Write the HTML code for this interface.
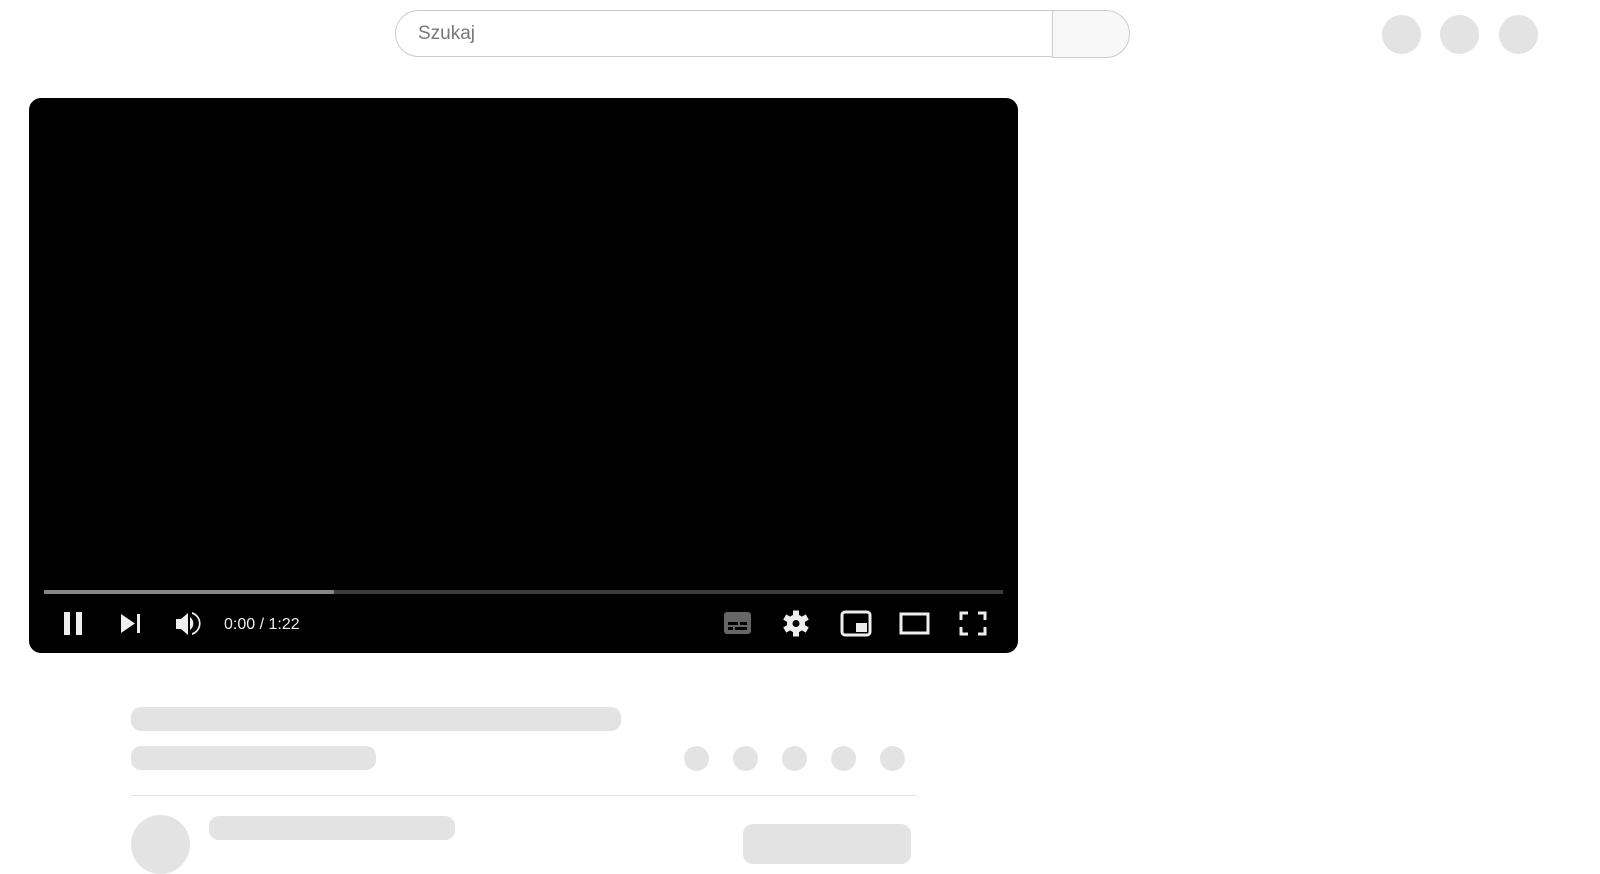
<!DOCTYPE html>
<html><head><style>
body{margin:0;width:1600px;height:865px;background:#fff;position:relative;overflow:hidden;font-family:"Liberation Sans",sans-serif}
.a{position:absolute}
.g{background:#e3e3e3}
.c{border-radius:50%}
.r{border-radius:10px}
svg{position:absolute}
</style></head><body>
<div class="a" style="left:395px;top:10px;width:657px;height:47px;border:1px solid #ccc;border-right:none;border-radius:24px 0 0 24px;box-sizing:border-box"></div>
<div class="a" style="left:418px;top:23px;font-size:19px;color:#777">Szukaj</div>
<div class="a" style="left:1052px;top:10px;width:78px;height:48px;border:1px solid #ccc;border-radius:0 24px 24px 0;background:#f8f8f8;box-sizing:border-box"></div>
<div class="a g c" style="left:1382px;top:15px;width:39px;height:39px"></div>
<div class="a g c" style="left:1440px;top:15px;width:39px;height:39px"></div>
<div class="a g c" style="left:1499px;top:15px;width:39px;height:39px"></div>

<div class="a" style="left:29px;top:98px;width:989px;height:555px;background:#000;border-radius:12px"></div>
<div class="a" style="left:44px;top:590px;width:959px;height:4px;background:#3d3d3d"></div>
<div class="a" style="left:44px;top:590px;width:290px;height:4px;background:#888"></div>
<svg style="left:0;top:0" width="1600" height="865">
<g fill="#eee">
<rect x="64" y="612" width="6" height="23"/><rect x="76" y="612" width="6" height="23"/>
<path d="M121 614 L135 623.5 L121 633Z"/><rect x="137" y="614" width="3" height="19"/>
<path d="M176 619h5l7-6v22l-7-6h-5z"/>
<path d="M190 617a8 8 0 0 1 0 13z"/>
<path d="M192 612a12 12 0 0 1 0 23v-2a10 10 0 0 0 0-19z"/>
</g>
<text x="224" y="629" fill="#eee" font-size="16" font-family="Liberation Sans">0:00 / 1:22</text>
<rect x="724" y="612" width="27" height="22" rx="3" fill="#666"/>
<g fill="#000"><rect x="728" y="622" width="10" height="3"/><rect x="740" y="622" width="7" height="3"/><rect x="728" y="627" width="5" height="3"/><rect x="735" y="627" width="12" height="3"/></g>
<g transform="translate(796 623.5)" fill="#eee"><circle r="9"/><g><rect x="-3" y="-13" width="6" height="26"/><rect x="-3" y="-13" width="6" height="26" transform="rotate(60)"/><rect x="-3" y="-13" width="6" height="26" transform="rotate(120)"/></g><circle r="3.5" fill="#000"/></g>
<rect x="842" y="612" width="28" height="23" rx="3" fill="none" stroke="#eee" stroke-width="3"/><rect x="856" y="623" width="11" height="9" fill="#eee"/>
<rect x="901" y="614" width="27" height="19" fill="none" stroke="#eee" stroke-width="3"/>
<path d="M961 620v-7h7M978 613h7v7M985 627v7h-7M968 634h-7v-7" fill="none" stroke="#eee" stroke-width="3"/>
</svg>

<div class="a g r" style="left:131px;top:707px;width:490px;height:24px"></div>
<div class="a g r" style="left:131px;top:746px;width:245px;height:24px"></div>
<div class="a g c" style="left:684px;top:746px;width:25px;height:25px"></div>
<div class="a g c" style="left:733px;top:746px;width:25px;height:25px"></div>
<div class="a g c" style="left:782px;top:746px;width:25px;height:25px"></div>
<div class="a g c" style="left:831px;top:746px;width:25px;height:25px"></div>
<div class="a g c" style="left:880px;top:746px;width:25px;height:25px"></div>
<div class="a" style="left:131px;top:795px;width:785px;height:1px;background:#e5e5e5"></div>
<div class="a g c" style="left:131px;top:815px;width:59px;height:59px"></div>
<div class="a g r" style="left:209px;top:816px;width:246px;height:24px"></div>
<div class="a g r" style="left:743px;top:824px;width:168px;height:40px"></div>
</body></html>
